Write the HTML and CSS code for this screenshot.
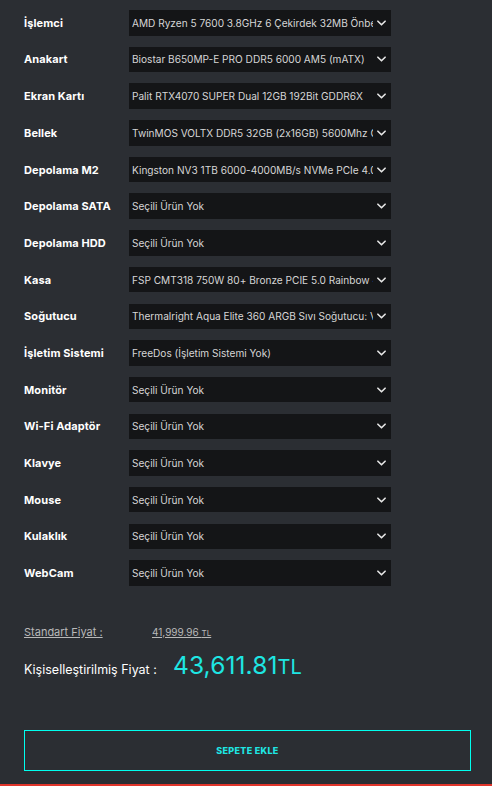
FILE: index.html
```html
<!DOCTYPE html>
<html lang="tr">
<head>
<meta charset="utf-8">
<link rel="stylesheet" href="styles.css">
</head>
<body>
<div class="page">
  <div class="rows">
    <div class="row"><div class="label">İşlemci</div><div class="sel"><span class="val">AMD Ryzen 5 7600 3.8GHz 6 Çekirdek 32MB Önbellek</span><svg class="chev" viewBox="0 0 10 6"><path d="M1 1l4 4 4-4"/></svg></div></div>
    <div class="row"><div class="label">Anakart</div><div class="sel"><span class="val">Biostar B650MP-E PRO DDR5 6000 AM5 (mATX)</span><svg class="chev" viewBox="0 0 10 6"><path d="M1 1l4 4 4-4"/></svg></div></div>
    <div class="row"><div class="label">Ekran Kartı</div><div class="sel"><span class="val">Palit RTX4070 SUPER Dual 12GB 192Bit GDDR6X</span><svg class="chev" viewBox="0 0 10 6"><path d="M1 1l4 4 4-4"/></svg></div></div>
    <div class="row"><div class="label">Bellek</div><div class="sel"><span class="val">TwinMOS VOLTX DDR5 32GB (2x16GB) 5600Mhz CL46</span><svg class="chev" viewBox="0 0 10 6"><path d="M1 1l4 4 4-4"/></svg></div></div>
    <div class="row"><div class="label">Depolama M2</div><div class="sel"><span class="val">Kingston NV3 1TB 6000-4000MB/s NVMe PCIe 4.0 SSD</span><svg class="chev" viewBox="0 0 10 6"><path d="M1 1l4 4 4-4"/></svg></div></div>
    <div class="row"><div class="label">Depolama SATA</div><div class="sel"><span class="val">Seçili Ürün Yok</span><svg class="chev" viewBox="0 0 10 6"><path d="M1 1l4 4 4-4"/></svg></div></div>
    <div class="row"><div class="label">Depolama HDD</div><div class="sel"><span class="val">Seçili Ürün Yok</span><svg class="chev" viewBox="0 0 10 6"><path d="M1 1l4 4 4-4"/></svg></div></div>
    <div class="row"><div class="label">Kasa</div><div class="sel"><span class="val">FSP CMT318 750W 80+ Bronze PCIE 5.0 Rainbow 4 Fanlı</span><svg class="chev" viewBox="0 0 10 6"><path d="M1 1l4 4 4-4"/></svg></div></div>
    <div class="row"><div class="label">Soğutucu</div><div class="sel"><span class="val">Thermalright Aqua Elite 360 ARGB Sıvı Soğutucu: V3</span><svg class="chev" viewBox="0 0 10 6"><path d="M1 1l4 4 4-4"/></svg></div></div>
    <div class="row"><div class="label">İşletim Sistemi</div><div class="sel"><span class="val">FreeDos (İşletim Sistemi Yok)</span><svg class="chev" viewBox="0 0 10 6"><path d="M1 1l4 4 4-4"/></svg></div></div>
    <div class="row"><div class="label">Monitör</div><div class="sel"><span class="val">Seçili Ürün Yok</span><svg class="chev" viewBox="0 0 10 6"><path d="M1 1l4 4 4-4"/></svg></div></div>
    <div class="row"><div class="label">Wi-Fi Adaptör</div><div class="sel"><span class="val">Seçili Ürün Yok</span><svg class="chev" viewBox="0 0 10 6"><path d="M1 1l4 4 4-4"/></svg></div></div>
    <div class="row"><div class="label">Klavye</div><div class="sel"><span class="val">Seçili Ürün Yok</span><svg class="chev" viewBox="0 0 10 6"><path d="M1 1l4 4 4-4"/></svg></div></div>
    <div class="row"><div class="label">Mouse</div><div class="sel"><span class="val">Seçili Ürün Yok</span><svg class="chev" viewBox="0 0 10 6"><path d="M1 1l4 4 4-4"/></svg></div></div>
    <div class="row"><div class="label">Kulaklık</div><div class="sel"><span class="val">Seçili Ürün Yok</span><svg class="chev" viewBox="0 0 10 6"><path d="M1 1l4 4 4-4"/></svg></div></div>
    <div class="row"><div class="label">WebCam</div><div class="sel"><span class="val">Seçili Ürün Yok</span><svg class="chev" viewBox="0 0 10 6"><path d="M1 1l4 4 4-4"/></svg></div></div>
  </div>

  <div class="prices">
    <div class="std">
      <span class="std-label">Standart Fiyat :</span>
      <span class="std-val">41,999.96 <small>TL</small></span>
    </div>
    <div class="custom">
      <span class="custom-label">Kişiselleştirilmiş Fiyat :</span>
      <span class="custom-val">43,611.81<span class="tl">TL</span></span>
    </div>
  </div>

  <div class="btn">SEPETE EKLE</div>
</div>
<div class="redline"></div>
</body>
</html>
```
FILE: styles.css
```css
html, body {
  margin: 0;
  padding: 0;
  background: #2b2e33;
}
body {
  font-family: Inter, "Noto Sans", "Liberation Sans", sans-serif;
  font-feature-settings: "calt" 0;
  height: 786px;
  position: relative;
  overflow: hidden;
}
.page {
  padding: 10px 21px 0 24px;
}
.rows {
  display: flex;
  flex-direction: column;
  gap: 11.2px;
}
.row {
  display: flex;
  align-items: center;
  height: 25.5px;
}
.label {
  width: 105px;
  flex: none;
  color: #ffffff;
  font-weight: 700;
  font-size: 11px;
  letter-spacing: 0.1px;
}
.sel {
  width: 262px;
  height: 100%;
  background: #141517;
  display: flex;
  align-items: center;
  padding: 0 5px 0 3px;
  box-sizing: border-box;
}
.val {
  flex: 1;
  min-width: 0;
  overflow: hidden;
  white-space: nowrap;
  color: #d6d6d6;
  font-size: 10.1px;
  margin-right: 4px;
}
.chev {
  width: 9px;
  height: 6px;
  flex: none;
  fill: none;
  stroke: #e6e6e6;
  stroke-width: 1.8;
  stroke-linecap: round;
  stroke-linejoin: round;
}
.prices {
  margin-top: 39px;
}
.std {
  display: flex;
  align-items: baseline;
  color: #b9b9b9;
}
.std-label {
  width: 128px;
  font-size: 11px;
  text-decoration: underline;
}
.std-val {
  font-size: 10px;
  text-decoration: underline;
}
.std-val small {
  font-size: 8px;
}
.custom {
  display: flex;
  align-items: baseline;
  margin-top: 11px;
}
.custom-label {
  width: 149px;
  color: #ffffff;
  font-size: 12.5px;
}
.custom-val {
  color: #1ee6e3;
  font-size: 24.5px;
  letter-spacing: 0.1px;
}
.custom-val .tl {
  font-size: 20px;
}
.btn {
  margin-top: 50px;
  height: 41px;
  border: 1px solid #00ffee;
  box-sizing: border-box;
  display: flex;
  align-items: center;
  justify-content: center;
  color: #1ee6e3;
  font-weight: 800;
  font-size: 9px;
  letter-spacing: 0.3px;
}
.redline {
  position: absolute;
  left: 0;
  right: 0;
  bottom: 0;
  height: 2px;
  background: #e0352b;
}
```
